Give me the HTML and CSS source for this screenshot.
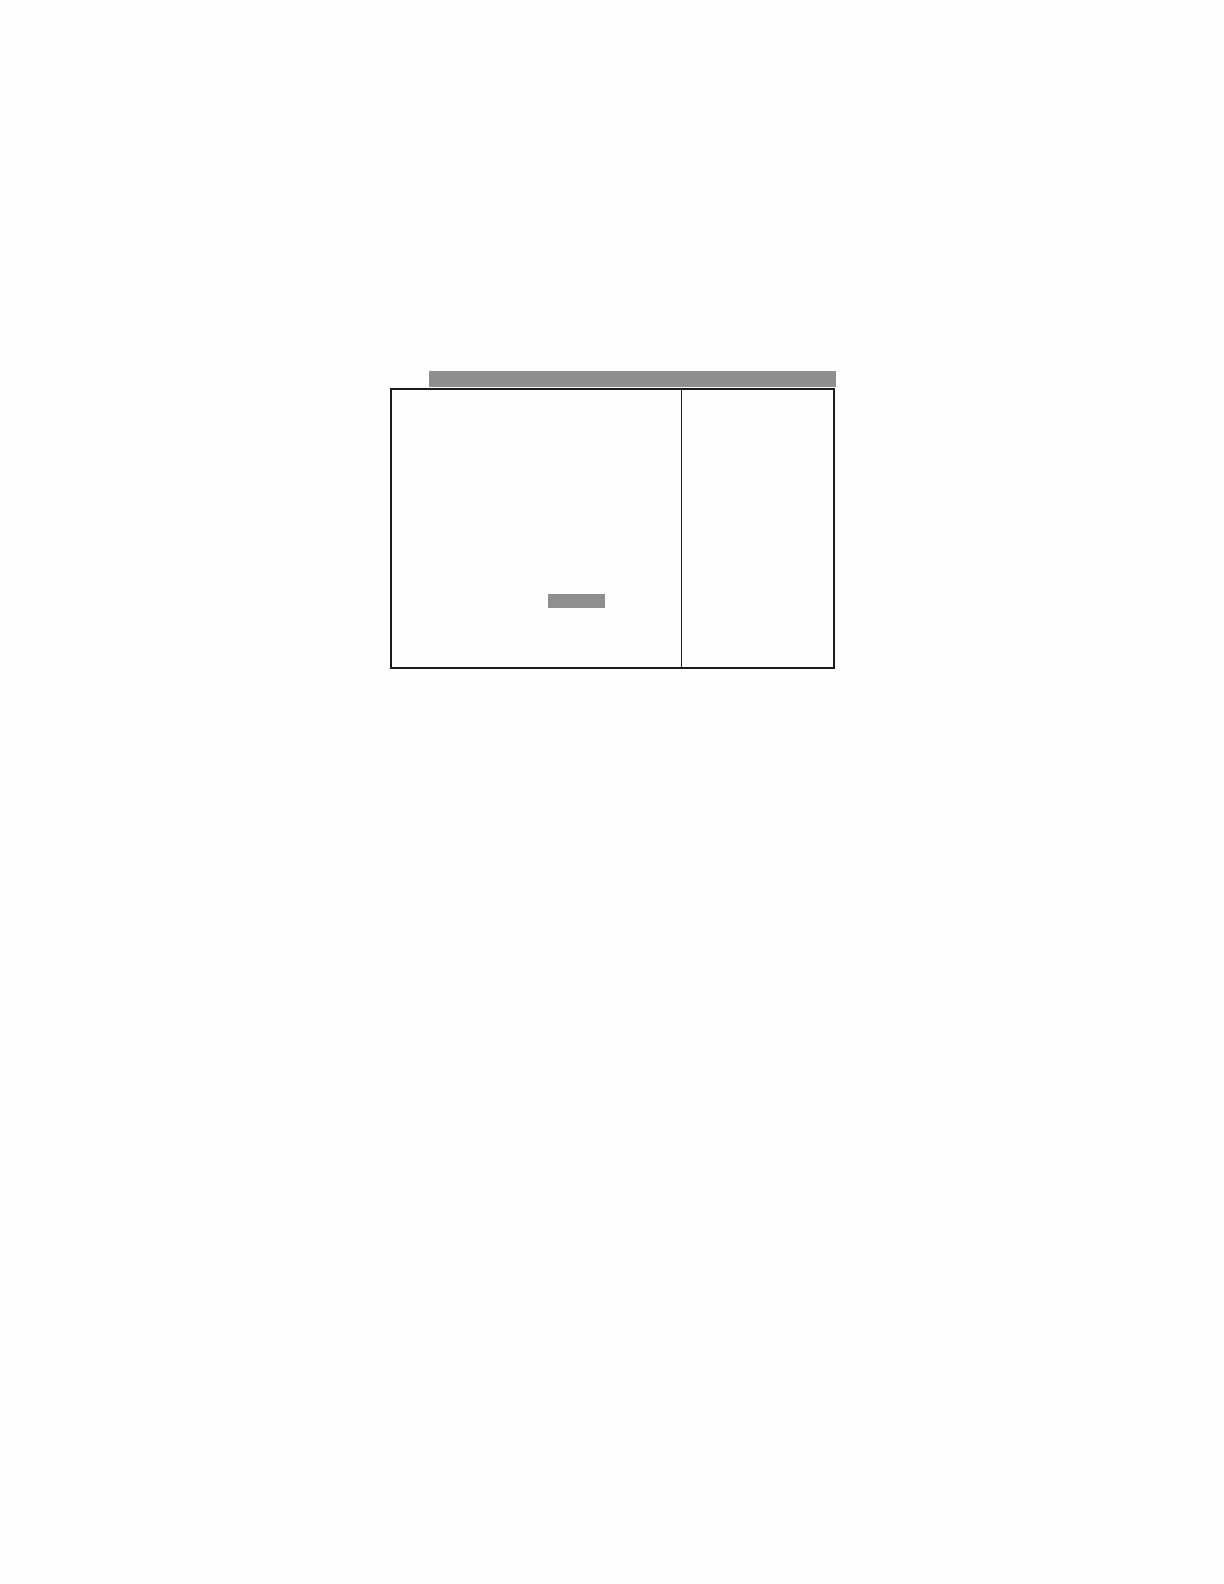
FILE: index.html
```html
<!DOCTYPE html>
<html lang="en">
<head>
  <meta charset="utf-8">
  <meta name="viewport" content="width=device-width, initial-scale=1">
  <title>Setup</title>
  <link rel="stylesheet" href="styles.css">
</head>
<body>
  <main class="screen">
    <header class="menu-bar"></header>
    <div class="panel">
      <section class="settings">
        <div class="selection"></div>
      </section>
      <aside class="help"></aside>
    </div>
  </main>
</body>
</html>
```

FILE: styles.css
```css
body {
  margin: 0;
  background: #fefefe;
  font-family: "Liberation Sans", sans-serif;
}

.screen {
  box-sizing: border-box;
  display: flex;
  flex-direction: column;
  gap: 1px;
  max-width: 448px;
  margin: 0 auto;
  padding: 371px 0 64px 2px;
}

.menu-bar {
  height: 16px;
  margin-left: 39px;
  background: #8f8e8f;
}

.panel {
  display: grid;
  grid-template-columns: minmax(0, 1fr) 152px;
  margin-right: 1px;
  border: 2px solid #1c1a1c;
}

.settings {
  padding: 204px 16px 59px 156px;
}

.selection {
  max-width: 57px;
  height: 14px;
  background: #8f8f8f;
}

.help {
  border-left: 1px solid #1c1a1c;
}
```
